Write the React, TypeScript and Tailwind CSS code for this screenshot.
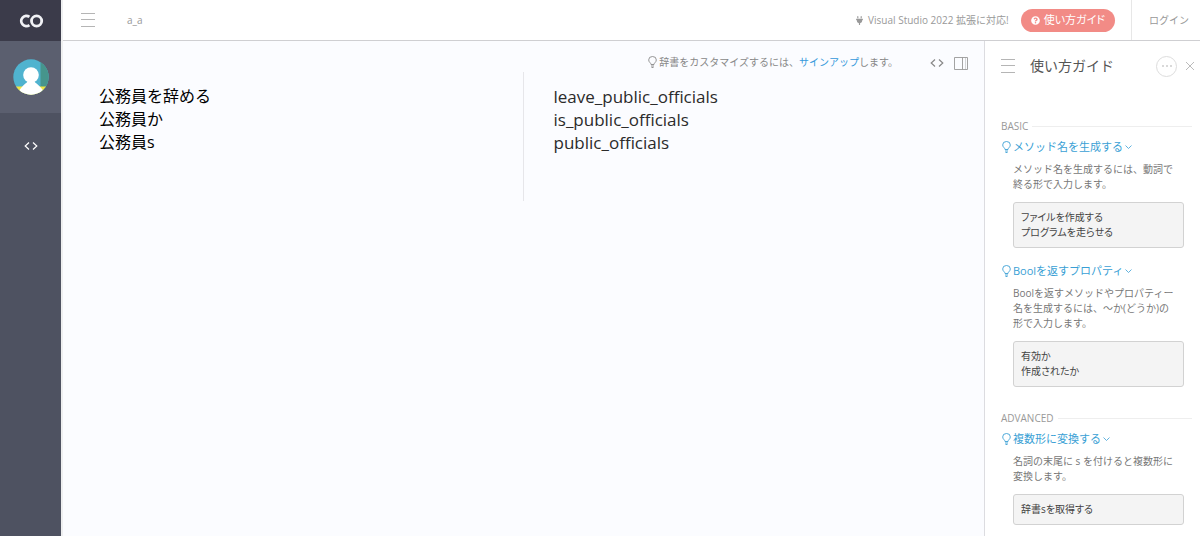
import type { ReactNode } from "react"
import { FaPlug, FaQuestionCircle } from "react-icons/fa"

const source = "公務員を辞める\n公務員か\n公務員s"
const result = ["leave_public_officials", "is_public_officials", "public_officials"]

const guide = [
  {
    title: "BASIC",
    topics: [
      {
        name: "メソッド名を生成する",
        text: "メソッド名を生成するには、動詞で終る形で入力します。",
        examples: ["ファイルを作成する", "プログラムを走らせる"],
      },
      {
        name: "Boolを返すプロパティ",
        text: "Boolを返すメソッドやプロパティー名を生成するには、〜か(どうか)の形で入力します。",
        examples: ["有効か", "作成されたか"],
      },
    ],
  },
  {
    title: "ADVANCED",
    topics: [
      {
        name: "複数形に変換する",
        text: "名詞の末尾に s を付けると複数形に変換します。",
        examples: ["辞書sを取得する"],
      },
    ],
  },
]

function Logo() {
  return (
    <svg width="26" height="16" viewBox="0 0 26 16" fill="none" stroke="#f1f2f6" strokeWidth="2.8">
      <path d="M11.4 3.9A5.100 5.100 0 1 0 11.4 12.100" />
      <circle cx="18.6" cy="8" r="5.1" />
    </svg>
  )
}

function Avatar() {
  return (
    <svg width="36" height="36" viewBox="0 0 36 36">
      <defs>
        <clipPath id="avatar">
          <circle cx="18" cy="18" r="17.7" />
        </clipPath>
      </defs>
      <g clipPath="url(#avatar)">
        <path d="M0 0h36v36H0z" fill="#50b3cf" />
        <path d="M27.5 0H36v36h-8.500z" fill="#46958c" />
        <path d="M0 27.500h36V36H0z" fill="#f0e442" />
        <path d="M5 36C7 27 12 26 15 22h6c3 4 8 5 11 14z" fill="#fff" />
        <circle cx="18" cy="16" r="7.8" fill="#fff" />
      </g>
    </svg>
  )
}

function Menu() {
  return (
    <svg width="14" height="14" viewBox="0 0 14 14" stroke="#b5b5b5" strokeWidth="1">
      <path d="M0 .5h14M0 6.500h14M0 13.500h14" />
    </svg>
  )
}

function Code() {
  return (
    <svg width="14" height="10" viewBox="0 0 14 10" fill="none" stroke="currentColor" strokeWidth="1.2">
      <path d="M5 1.500 1.200 5 5 8.500M9 1.500 12.800 5 9 8.500" />
    </svg>
  )
}

function Bulb() {
  return (
    <svg className="shrink-0" width="9" height="12" viewBox="0 0 9 12" fill="none" stroke="currentColor" strokeWidth=".9">
      <path d="M3 8.500C3 6.800.700 6.300.700 3.900a3.800 3.400 0 0 1 7.600 0C8.300 6.300 6 6.800 6 8.500zM3 10h3M3.500 11.500h2" />
    </svg>
  )
}

function Chevron() {
  return (
    <svg width="7" height="4" viewBox="0 0 7 4" fill="none" stroke="currentColor" strokeWidth=".8">
      <path d="m.5.5 3 3 3-3" />
    </svg>
  )
}

function IconButton({ label, children }: { label: string; children: ReactNode }) {
  return (
    <button type="button" aria-label={label} className="flex shrink-0 items-center justify-center">
      {children}
    </button>
  )
}

export default function App() {
  return (
    <div
      lang="ja"
      className="flex h-screen overflow-hidden bg-[#fbfcff] font-['Open_Sans','Noto_Sans_CJK_JP',sans-serif] text-[#777]"
    >
      <nav className="flex w-[63px] shrink-0 flex-col border-r-2 border-[#eeeff0] bg-[#4e5261]">
        <a href="#" aria-label="CO" className="flex h-[41px] items-center justify-center bg-[#3b3b4a]">
          <Logo />
        </a>
        <a href="#" aria-label="プロフィール" className="flex h-18 items-center justify-center bg-[#5b5f6f]">
          <Avatar />
        </a>
        <a href="#" aria-label="コード" className="flex h-[66px] items-center justify-center text-white">
          <Code />
        </a>
      </nav>

      <div className="flex min-w-0 flex-1 flex-col">
        <header className="flex h-[41px] shrink-0 items-center border-b border-[#cfcfd2] bg-white text-[10px] text-[#999]">
          <div className="flex flex-1 items-center gap-8 pl-[18px]">
            <IconButton label="メニュー">
              <Menu />
            </IconButton>
            <span>a_a</span>
          </div>
          <a href="#" className="mr-3 flex items-center gap-1">
            <FaPlug size={9} />
            Visual Studio 2022 拡張に対応!
          </a>
          <button
            type="button"
            className="flex h-[23px] items-center gap-1 rounded-full bg-[#f28b86] px-[10px] text-[11px] text-white [font-feature-settings:'palt']"
          >
            <FaQuestionCircle size={9} />
            使い方ガイド
          </button>
          <div className="ml-4 flex h-full w-[69px] items-center border-l border-[#e7e7e7] pl-[17px]">
            <a href="#">ログイン</a>
          </div>
        </header>

        <div className="flex min-h-0 flex-1">
          <main className="min-w-0 flex-1">
            <div className="flex h-[31px] items-end justify-end pr-4 text-[10px] text-[#888]">
              <p className="mr-8 flex h-5 items-center gap-[2px]">
                <Bulb />
                <span>
                  辞書をカスタマイズするには、
                  <a href="#" className="text-[#3498db]">サインアップ</a>
                  します。
                </span>
              </p>
              <div className="flex h-[18px] items-center gap-[10px]">
                <IconButton label="コード表示">
                  <Code />
                </IconButton>
                <IconButton label="パネル表示">
                  <svg width="14" height="13" viewBox="0 0 14 13" fill="none" stroke="#999">
                    <path d="M.5.5h13v12H.5zM8.500.5v12" strokeWidth=".9" />
                    <path d="M11.500.5v12" strokeWidth=".4" />
                  </svg>
                </IconButton>
              </div>
            </div>
            <div className="grid grid-cols-2 leading-[23px]">
              <textarea
                aria-label="入力"
                defaultValue={source}
                className="h-[129px] resize-none overflow-hidden border-r border-[#e6e6ea] px-9 pt-[13px] text-[16px] text-black outline-none"
              />
              <div className="px-[30px] pt-[13px] text-[17px] text-[#2b2b2b]">
                {result.map((line) => (
                  <p key={line}>{line}</p>
                ))}
              </div>
            </div>
          </main>

          <aside className="w-[216px] shrink-0 border-l border-[#dcdce0] bg-white">
            <div className="flex h-[50px] items-center pr-[5px] pl-4">
              <IconButton label="ガイドメニュー">
                <Menu />
              </IconButton>
              <h1 className="ml-[15px] flex-1 text-[14px] leading-5 text-[#555]">使い方ガイド</h1>
              <button
                type="button"
                aria-label="その他"
                className="flex size-[21px] items-center justify-center gap-[2px] rounded-full border border-[#ddd]"
              >
                <span className="size-[2px] rounded-full bg-[#ccc]" />
                <span className="size-[2px] rounded-full bg-[#ccc]" />
                <span className="size-[2px] rounded-full bg-[#ccc]" />
              </button>
              <button type="button" aria-label="閉じる" className="ml-2">
                <svg width="10" height="10" viewBox="0 0 10 10" stroke="#bbb">
                  <path d="m1 1 8 8M9 1 1 9" />
                </svg>
              </button>
            </div>

            <div className="pt-7 pl-4">
              {guide.map((section) => (
                <section key={section.title} className="mb-6">
                  <h2 className="flex h-[14px] items-center gap-1 pr-2 text-[10px] text-[#999] after:h-px after:flex-1 after:bg-[#eee]">
                    {section.title}
                  </h2>
                  {section.topics.map((topic) => (
                    <div key={topic.name} className="mb-[9px] pt-[5px] pr-4">
                      <button type="button" className="flex h-[18px] items-center gap-[2px] pl-[1px] text-[11px] text-[#3a9fd5]">
                        <Bulb />
                        {topic.name}
                        <Chevron />
                      </button>
                      <div className="pl-3">
                        <p className="pt-[6px] pr-[6px] text-[10px] leading-[15px]">{topic.text}</p>
                        <div className="mt-[10px] rounded-[3px] border border-[#d2d2d2] bg-[#f4f4f4] px-[7px] py-[7px] text-[10px] leading-[15px] text-[#444] [font-feature-settings:'palt']">
                          {topic.examples.map((example) => (
                            <p key={example}>{example}</p>
                          ))}
                        </div>
                      </div>
                    </div>
                  ))}
                </section>
              ))}
            </div>
          </aside>
        </div>
      </div>
    </div>
  )
}
